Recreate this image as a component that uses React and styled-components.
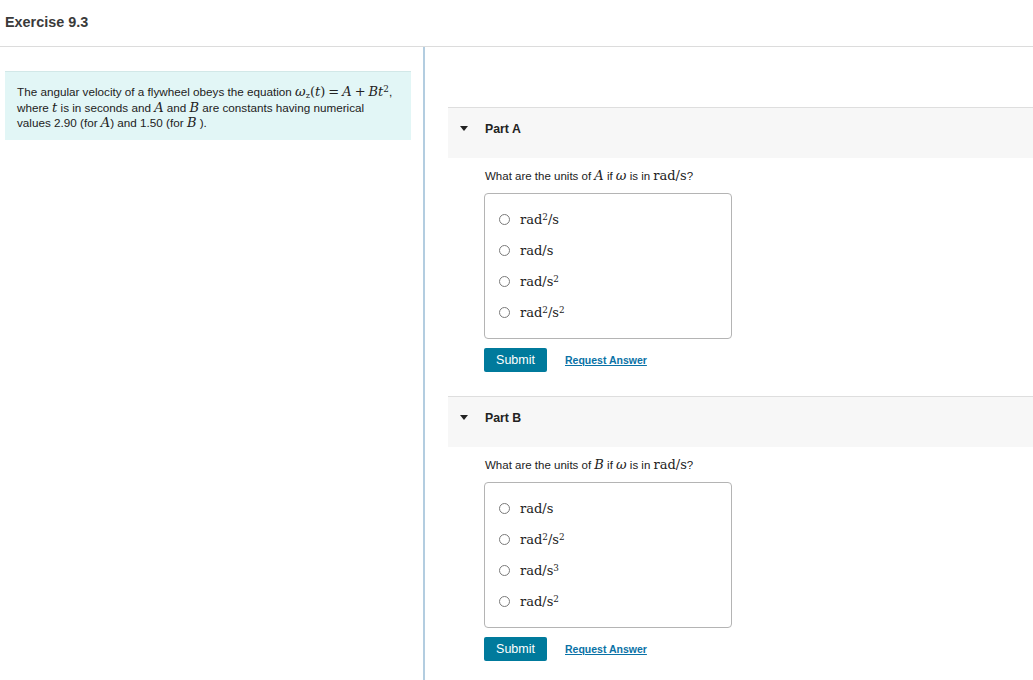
import React from "react";
import styled, { createGlobalStyle } from "styled-components";

const Global = createGlobalStyle`
  html, body { margin: 0; padding: 0; background: #fff; }
  body { font-family: "Liberation Sans", Arial, sans-serif; color: #222; }
  * { box-sizing: border-box; }
`;

const Page = styled.div`
  width: 1033px;
  height: 680px;
  display: flex;
  flex-direction: column;
  overflow: hidden;
`;

const TopBar = styled.header`
  flex-shrink: 0;
  height: 47px;
  border-bottom: 1px solid #dcdcdc;
  display: flex;
  align-items: center;
  padding: 0 0 2px 5px;
`;

const Title = styled.h1`
  margin: 0;
  font-size: 14.4px;
  font-weight: 700;
  color: #3a3a3a;
`;

const Body = styled.div`
  flex: 1;
  min-height: 0;
  display: flex;
`;

const LeftCol = styled.aside`
  width: 425px;
  flex-shrink: 0;
  border-right: 2px solid #b3cde0;
  padding: 24px 12px 0 5px;
`;

const IntroBox = styled.div`
  background: #e2f6f6;
  border-top: 1px solid #d2e8e8;
  padding: 12px 8px 9px 12px;
  font-size: 11.7px;
  line-height: 15.5px;
  white-space: nowrap;
  color: #222;
`;

const Math = styled.span`
  font-family: "DejaVu Serif", "Liberation Serif", serif;
  font-size: ${(p) => p.$size || "13px"};
  line-height: 1;
  font-style: ${(p) => (p.$upright ? "normal" : "italic")};
`;

const Op = styled.span`
  font-style: normal;
  padding: ${(p) => (p.$spaced ? "0 3px" : "0")};
`;

const Sup = styled.sup`
  font-size: 0.68em;
  line-height: 0;
  vertical-align: 0.45em;
  font-style: normal;
`;

const Sub = styled.sub`
  font-size: 0.62em;
  line-height: 0;
  vertical-align: -0.2em;
  font-style: normal;
`;

const RightCol = styled.main`
  flex: 1;
  padding: 60px 0 0 23px;
  display: flex;
  flex-direction: column;
`;

const Part = styled.section`
  display: flex;
  flex-direction: column;
  margin-bottom: 24px;
`;

const PartHeader = styled.div`
  height: 51px;
  background: #f7f7f7;
  border-top: 1px solid #dedede;
  display: flex;
  align-items: center;
  padding: 0 0 8px 12px;
  gap: 17px;
  font-size: 12.3px;
  font-weight: 700;
  color: #222;
`;

const Caret = styled.span`
  width: 0;
  height: 0;
  border-left: 4.5px solid transparent;
  border-right: 4.5px solid transparent;
  border-top: 5.5px solid #222;
  margin-bottom: 1px;
`;

const Content = styled.div`
  padding: 10px 0 0 36px;
  display: flex;
  flex-direction: column;
  align-items: flex-start;
`;

const Question = styled.p`
  margin: 0 0 9px 1px;
  font-size: 11.5px;
  line-height: 16px;
  color: #222;
`;

const Choices = styled.div`
  width: 248px;
  border: 1px solid #b4b4b4;
  border-radius: 4px;
  padding: 10px 0 10px 0;
  display: flex;
  flex-direction: column;
`;

const Choice = styled.label`
  height: 31px;
  display: flex;
  align-items: center;
  padding-left: 14px;
  gap: 10px;
  font-family: "DejaVu Serif", "Liberation Serif", serif;
  font-size: 13px;
  color: #222;
`;

const Radio = styled.span`
  width: 11px;
  height: 11px;
  border-radius: 50%;
  border: 1px solid #7a7a7a;
  background: #fff;
  margin-top: -1px;
`;

const Actions = styled.div`
  display: flex;
  align-items: center;
  gap: 18px;
  margin-top: 9px;
`;

const SubmitBtn = styled.button`
  width: 63px;
  height: 24px;
  border: none;
  border-radius: 2px;
  background: #007a9c;
  color: #fff;
  font-family: "Liberation Sans", Arial, sans-serif;
  font-size: 12.5px;
  padding: 0;
`;

const LinkBtn = styled.a`
  font-size: 10.5px;
  font-weight: 700;
  color: #0a72a6;
  text-decoration: underline;
  cursor: pointer;
`;

const Unit = ({ n, d }) => (
  <span>
    rad{n && <Sup>{n}</Sup>}/s{d && <Sup>{d}</Sup>}
  </span>
);

const partsData = [
  {
    name: "Part A",
    sym: "A",
    opts: [
      { n: "2", d: null },
      { n: null, d: null },
      { n: null, d: "2" },
      { n: "2", d: "2" },
    ],
  },
  {
    name: "Part B",
    sym: "B",
    opts: [
      { n: null, d: null },
      { n: "2", d: "2" },
      { n: null, d: "3" },
      { n: null, d: "2" },
    ],
  },
];

export default function App() {
  return (
    <Page>
      <Global />
      <TopBar>
        <Title>Exercise 9.3</Title>
      </TopBar>
      <Body>
        <LeftCol>
          <IntroBox>
            The angular velocity of a flywheel obeys the equation{" "}
            <Math>
              ω<Sub>z</Sub>
              <Op>(</Op>t<Op>)</Op>
              <Op $spaced>=</Op>A<Op $spaced>+</Op>Bt<Sup>2</Sup>
            </Math>
            ,<br />
            where <Math>t</Math> is in seconds and <Math>A</Math> and{" "}
            <Math>B</Math> are constants having numerical
            <br />
            values 2.90 (for <Math>A</Math>) and 1.50 (for <Math>B</Math> ).
          </IntroBox>
        </LeftCol>
        <RightCol>
          {partsData.map((p) => (
            <Part key={p.name}>
              <PartHeader>
                <Caret />
                {p.name}
              </PartHeader>
              <Content>
                <Question>
                  What are the units of <Math>{p.sym}</Math> if{" "}
                  <Math>ω</Math> is in <Math $upright>rad/s</Math>?
                </Question>
                <Choices>
                  {p.opts.map((o, i) => (
                    <Choice key={i}>
                      <Radio />
                      <Unit n={o.n} d={o.d} />
                    </Choice>
                  ))}
                </Choices>
                <Actions>
                  <SubmitBtn>Submit</SubmitBtn>
                  <LinkBtn>Request Answer</LinkBtn>
                </Actions>
              </Content>
            </Part>
          ))}
        </RightCol>
      </Body>
    </Page>
  );
}
